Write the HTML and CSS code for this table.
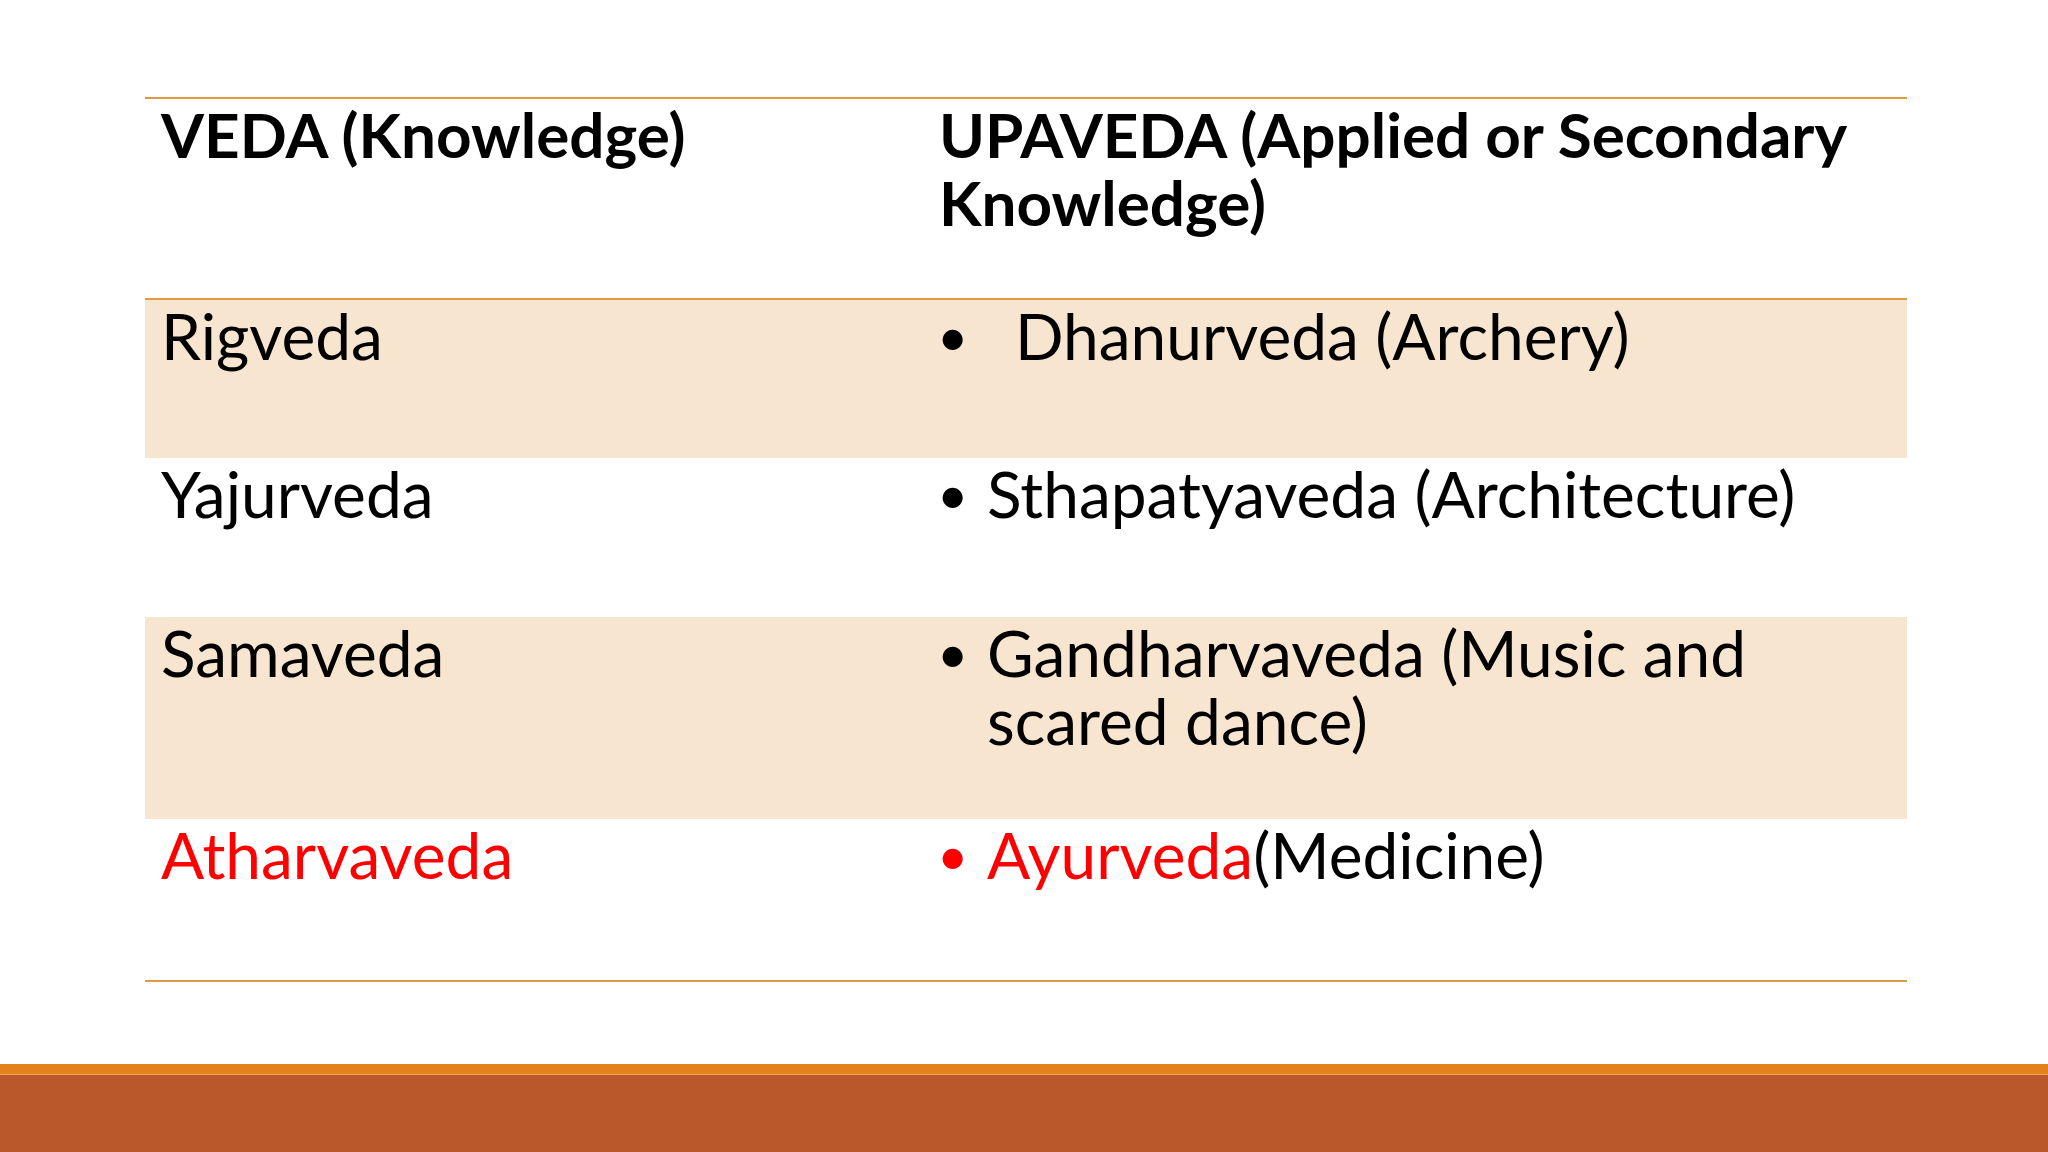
FILE: index.html
```html
<!DOCTYPE html>
<html>
<head>
<meta charset="utf-8">
<link rel="stylesheet" href="styles.css">
</head>
<body>
<div class="slide">
  <div class="content">
    <div class="table">
      <div class="row head">
        <div class="cell c1">VEDA (Knowledge)</div>
        <div class="cell c2">UPAVEDA (Applied or Secondary Knowledge)</div>
      </div>
      <div class="row r1 shade">
        <div class="cell c1">Rigveda</div>
        <div class="cell c2"><span class="bullet">•</span><span class="txt indent">Dhanurveda (Archery)</span></div>
      </div>
      <div class="row r2">
        <div class="cell c1">Yajurveda</div>
        <div class="cell c2"><span class="bullet">•</span><span class="txt">Sthapatyaveda (Architecture)</span></div>
      </div>
      <div class="row r3 shade">
        <div class="cell c1">Samaveda</div>
        <div class="cell c2"><span class="bullet">•</span><span class="txt">Gandharvaveda (Music and scared dance)</span></div>
      </div>
      <div class="row r4">
        <div class="cell c1 red">Atharvaveda</div>
        <div class="cell c2"><span class="bullet red">•</span><span class="txt"><span class="red">Ayurveda</span>(Medicine)</span></div>
      </div>
    </div>
  </div>
  <div class="footer">
    <div class="stripe"></div>
    <div class="band"></div>
  </div>
</div>
</body>
</html>
```

FILE: styles.css
```css
html, body {
  margin: 0;
  padding: 0;
  background: #ffffff;
}
.slide {
  width: 2048px;
  height: 1152px;
  display: flex;
  flex-direction: column;
  overflow: hidden;
  font-family: "Lato", "Liberation Sans", sans-serif;
  color: #000;
}
.content {
  flex: 1;
  padding: 97px 141px 0 145px;
}
.table {
  width: 1762px;
  border-top: 2px solid #E09A42;
  border-bottom: 2px solid #E09A42;
}
.row {
  display: grid;
  grid-template-columns: 776px 986px;
}
.row.head {
  height: 199px;
  border-bottom: 2px solid #E09A42;
  font-weight: 700;
}
.r1 { height: 158px; }
.r2 { height: 159px; }
.r3 { height: 202px; }
.r4 { height: 161px; }
.shade { background: #F8E5CF; }
.cell {
  font-size: 64px;
  line-height: 68px;
  padding-top: 2px;
}
.head .cell {
  font-size: 62px;
  padding-top: 1px;
}
.c1 { padding-left: 16px; }
.c2 {
  padding-left: 18px;
  padding-right: 40px;
  display: flex;
  align-items: flex-start;
}
.bullet {
  width: 50px;
  flex: none;
  font-size: 54px;
  margin-left: -2px;
}
.txt { flex: 1; }
.indent { padding-left: 28px; }
.red { color: #FF0000; }
.footer {
  height: 88px;
  display: flex;
  flex-direction: column;
}
.stripe {
  height: 10px;
  background: #E3821A;
  border-bottom: 1px solid #F0A560;
}
.band {
  flex: 1;
  background: #BA572B;
}
```
